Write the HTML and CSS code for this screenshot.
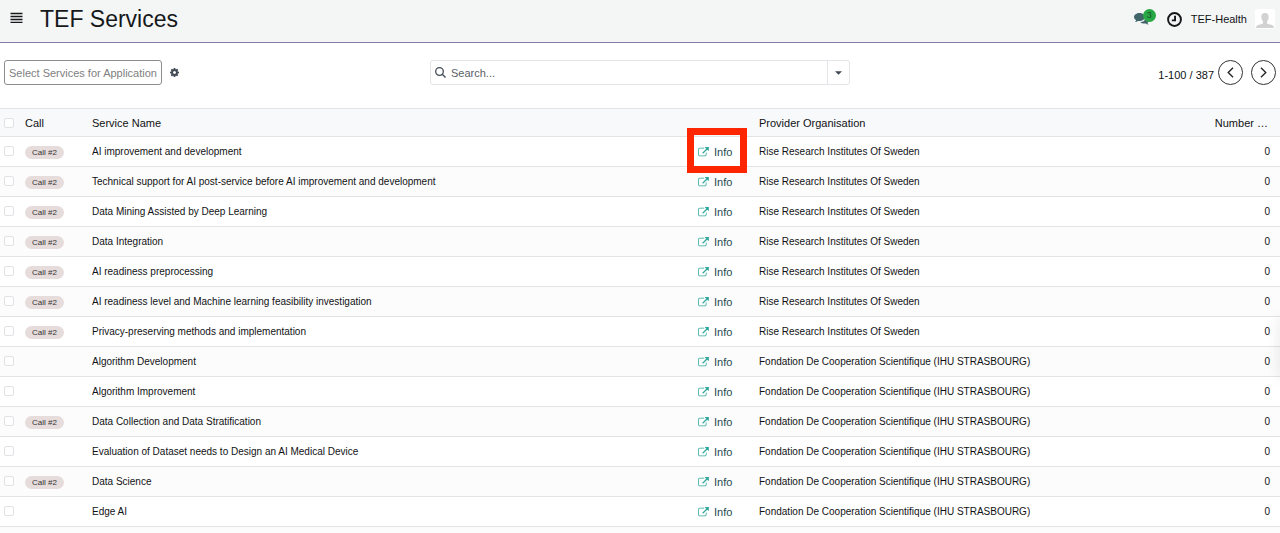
FILE: index.html
```html
<!DOCTYPE html>
<html lang="en">
<head>
<meta charset="utf-8">
<title>TEF Services</title>
<link rel="stylesheet" href="styles.css">
</head>
<body>
<svg class="sprite" aria-hidden="true">
  <symbol id="external" viewBox="0 0 1792 1664"><path d="M1408 928v320q0 119-84.500 203.500T1120 1536H288q-119 0-203.500-84.500T0 1248V416q0-119 84.500-203.500T288 128h704q14 0 23 9t9 23v64q0 14-9 23t-23 9H288q-66 0-113 47t-47 113v832q0 66 47 113t113 47h832q66 0 113-47t47-113V928q0-14 9-23t23-9h64q14 0 23 9t9 23zm384-864v512q0 26-19 45t-45 19-45-19l-176-176-652 652q-10 10-23 10t-23-10L695 983q-10-10-10-23t10-23l652-652-176-176q-19-19-19-45t19-45 45-19h512q26 0 45 19t19 45z"/></symbol>
</svg>
<div class="app">
  <header class="topbar">
    <button class="menu" aria-label="Menu"><svg viewBox="0 0 13 11"><path d="M.5 1.500h12M.5 4.500h12M.5 7.500h12M.5 10.500h12"/></svg></button>
    <h1 class="title">TEF Services</h1>
    <nav class="tray">
      <button class="messages" aria-label="Messages">
        <svg viewBox="0 0 15 12"><path d="M9 4.200c3.200-.6 6 .9 6 3.100 0 1-.6 1.900-1.500 2.500.2.700.6 1.100 1.100 1.600-1.100.1-2.100-.3-2.900-.9-2.300.4-4.300-.2-5.400-1.500C9 9 11.500 7.500 11.500 5z"/><path d="M5.500 0C8.500 0 11 1.800 11 4S8.500 8 5.500 8c-.5 0-1 0-1.500-.1-.9.700-1.900 1.100-3.100 1.200.6-.5 1-1.100 1.200-1.900C.8 6.400 0 5.300 0 4c0-2.200 2.500-4 5.500-4z"/></svg>
        <span class="count">3</span>
      </button>
      <button class="activity" aria-label="Activities"><svg viewBox="0 0 14 14"><circle cx="7" cy="7" r="6"/><path d="M7.500 3.500v4.300H4.500"/></svg></button>
      <button class="user">TEF-Health
        <svg viewBox="0 0 20 20"><rect class="photo" width="20" height="20" rx="2"/><path class="person" d="M10 4c2.500 0 3.700 1.500 3.700 4 0 2-.7 3.300-1.700 4.200v1.500c0 1 1.300 1.400 3.300 1.900 2.200.5 3.700 1.200 3.700 3.400H1c0-2.200 1.500-2.900 3.700-3.400 2-.5 3.300-.9 3.300-1.900v-1.500C7 11.300 6.300 10 6.300 8c0-2.500 1.200-4 3.700-4z"/></svg>
      </button>
    </nav>
  </header>
  <section class="controls">
    <div class="actions">
      <button class="select">Select Services for Application</button>
      <button class="gear" aria-label="Settings"><svg viewBox="128 128 1536 1536"><path d="M1152 896q0-106-75-181t-181-75-181 75-75 181 75 181 181 75 181-75 75-181zm512-109v222q0 12-8 23t-20 13l-185 28q-19 54-39 91 35 50 107 138 10 12 10 25t-9 23q-27 37-99 108t-94 71q-12 0-26-9l-138-108q-44 23-91 38-16 136-29 186-7 28-36 28h-222q-14 0-24.500-8.500t-11.500-21.500l-28-184q-49-16-90-37l-141 107q-10 9-25 9-14 0-25-11-126-114-165-168-7-10-7-23 0-12 8-23 15-21 51-66.500t54-70.500q-27-50-41-99l-183-27q-13-2-21-12.500t-8-23.500v-222q0-12 8-23t19-13l186-28q14-46 39-92-40-57-107-138-10-12-10-24 0-10 9-23 26-36 98.500-107.500t94.500-71.500q13 0 26 10l138 107q44-23 91-38 16-136 29-186 7-28 36-28h222q14 0 24.500 8.500t11.500 21.500l28 184q49 16 90 37l142-107q9-9 24-9 13 0 25 10 129 119 165 170 7 8 7 22 0 12-8 23-15 21-51 66.500t-54 70.500q26 50 41 98l183 28q13 2 21 12.500t8 23.500z"/></svg></button>
    </div>
    <div class="search">
      <svg class="lens" viewBox="0 0 11 11"><circle cx="4.500" cy="4.500" r="3.800"/><path d="M7.300 7.300l3.200 3.200"/></svg>
      <input type="text" aria-label="Search" placeholder="Search...">
      <button class="toggle" aria-label="Search options"><svg viewBox="0 0 8 4"><path d="M0 0h8L4 4z"/></svg></button>
    </div>
    <div class="pager">
      <span>1-100 / 387</span>
      <button class="round" aria-label="Previous"><svg viewBox="0 0 6 10"><path d="M5.300.6L.9 5l4.400 4.400"/></svg></button>
      <button class="round" aria-label="Next"><svg viewBox="0 0 6 10"><path d="M.7.6L5.100 5 .7 9.400"/></svg></button>
    </div>
  </section>
  <table class="list">
    <colgroup><col class="c-check"><col class="c-call"><col class="c-name"><col class="c-info"><col class="c-org"><col class="c-num"></colgroup>
    <thead>
      <tr><th><input type="checkbox" aria-label="Select all"></th><th>Call</th><th>Service Name</th><th></th><th>Provider Organisation</th><th class="num">Number …</th></tr>
    </thead>
    <tbody id="rows"></tbody>
  </table>
  <div class="edge-shadow"></div>
</div>
<script src="rows.js"></script>
</body>
</html>
```
FILE: styles.css
```css
* { box-sizing: border-box; }
body {
  margin: 0;
  font: 10px/16px "Liberation Sans", Arial, sans-serif;
  color: #111214;
  background: #fff;
}
button {
  font: inherit;
  color: inherit;
  background: none;
  border: 0;
  padding: 0;
}
svg { display: block; }
.sprite { display: none; }
.app { position: relative; height: 100vh; overflow: hidden; }

.topbar {
  display: flex;
  align-items: center;
  height: 43px;
  padding: 0 5px 4px 10px;
  background: #f4f6f6;
  border-bottom: 1px solid #8579a8;
}
.menu { margin-right: 17px; padding-bottom: 4px; }
.menu svg { width: 13px; height: 11px; stroke: #16181a; stroke-width: 1.300; }
.title { margin: 0; font-size: 23px; line-height: 28px; font-weight: 400; color: #16181a; }
.tray { display: flex; align-items: center; margin-left: auto; font-size: 11px; }
.messages { position: relative; margin-right: 18px; }
.messages svg { width: 15px; height: 12px; fill: #41656a; }
.count {
  position: absolute;
  left: 9px;
  top: -4px;
  width: 13px;
  height: 13px;
  border-radius: 7px;
  background: #28a745;
  color: #14532a;
  font-size: 9px;
  line-height: 13px;
}
.activity { margin-right: 9px; }
.activity svg { width: 15px; height: 15px; fill: none; stroke: #16181a; stroke-width: 1.800; }
.user { display: flex; align-items: center; gap: 8px; }
.user svg { width: 20px; height: 20px; }
.photo { fill: #fff; }
.person { fill: #d2d2d2; }

.controls {
  display: grid;
  grid-template-columns: 1fr 420px 1fr;
  align-items: center;
  height: 65px;
  padding: 0 4px 6px;
  font-size: 11px;
}
.actions { display: flex; align-items: center; gap: 8px; }
.select {
  height: 25px;
  padding: 0 4px;
  border: 1px solid #8d8d8d;
  border-radius: 3px;
  color: #808080;
}
.gear svg { width: 9px; height: 9px; fill: #414a54; }
.search {
  display: flex;
  align-items: center;
  height: 25px;
  border: 1px solid #e3e5e9;
  border-radius: 3px;
}
.lens { width: 11px; height: 11px; margin: 0 5px 0 4px; fill: none; stroke: #414a54; stroke-width: 1.300; }
.search input {
  flex: 1;
  min-width: 0;
  padding: 0;
  border: 0;
  font: inherit;
  color: #414a54;
}
.search input::placeholder { color: #5c6066; opacity: 1; }
.toggle {
  display: grid;
  place-items: center;
  width: 22px;
  height: 23px;
  border-left: 1px solid #e3e5e9;
}
.toggle svg { width: 7px; height: 4px; fill: #414a54; }
.pager { display: flex; align-items: center; justify-content: flex-end; gap: 8px; }
.pager span { padding-top: 4px; margin-right: -4px; }
.round {
  display: grid;
  place-items: center;
  width: 25px;
  height: 25px;
  border: 1px solid #333;
  border-radius: 50%;
}
.round svg { width: 7px; height: 11px; fill: none; stroke: #222; stroke-width: 1.200; }

.list { width: 100%; table-layout: fixed; border-collapse: separate; border-spacing: 0; }
.c-check { width: 20px; }
.c-call { width: 67px; }
.c-name { width: 606px; }
.c-info { width: 61px; }
.c-num { width: 68px; }
.list th, .list td {
  padding: 0 6px 0 5px;
  text-align: left;
  font-weight: 400;
  white-space: nowrap;
  border-bottom: 1px solid #e2e4e7;
}
.list th {
  height: 29px;
  font-size: 11px;
  background: #f8f9fb;
  border-top: 1px solid #e2e4e7;
}
.list td { height: 30px; }
.list tbody tr:nth-child(even) { background: #fcfcfc; }
.list th:first-child, .list td:first-child { padding: 0 0 0 4px; }
.list td:first-child { padding-bottom: 2px; }
.list .num { padding: 0 10px 0 0; text-align: right; }
.list th.num { padding-right: 12px; }
.list input {
  appearance: none;
  display: block;
  width: 10px;
  height: 10px;
  margin: 0;
  border: 1px solid #e0e2e5;
  border-radius: 2px;
  background: #fff;
}
.tag {
  display: block;
  width: 39px;
  height: 13px;
  margin-top: 1px;
  border-radius: 7px;
  background: #e6dcdc;
  color: #333;
  font-size: 8px;
  line-height: 13px;
  text-align: center;
}
.info {
  position: relative;
  display: flex;
  align-items: center;
  gap: 5px;
  color: #264a50;
  font-size: 11px;
  text-decoration: none;
}
.info svg { width: 11px; height: 10px; fill: #2fa89c; }
.marker {
  position: absolute;
  left: -11px;
  top: -16px;
  width: 60px;
  height: 45px;
  border: 7px solid #fd2600;
}
.edge-shadow {
  position: absolute;
  top: 318px;
  left: 100%;
  width: 8px;
  height: 60px;
  box-shadow: 0 0 14px rgba(0, 0, 0, .12);
}
```
FILE: rows.js
```js
const rise = "Rise Research Institutes Of Sweden";
const ihu = "Fondation De Cooperation Scientifique (IHU STRASBOURG)";
const services = [
  [true, "AI improvement and development", rise],
  [true, "Technical support for AI post-service before AI improvement and development", rise],
  [true, "Data Mining Assisted by Deep Learning", rise],
  [true, "Data Integration", rise],
  [true, "AI readiness preprocessing", rise],
  [true, "AI readiness level and Machine learning feasibility investigation", rise],
  [true, "Privacy-preserving methods and implementation", rise],
  [false, "Algorithm Development", ihu],
  [false, "Algorithm Improvement", ihu],
  [true, "Data Collection and Data Stratification", ihu],
  [false, "Evaluation of Dataset needs to Design an AI Medical Device", ihu],
  [true, "Data Science", ihu],
  [false, "Edge AI", ihu]
];
document.getElementById("rows").innerHTML = services.map(([call, name, org], i) => `
  <tr>
    <td><input type="checkbox" aria-label="Select ${name}"></td>
    <td>${call ? '<span class="tag">Call #2</span>' : ""}</td>
    <td>${name}</td>
    <td><a class="info" href="#"><svg aria-hidden="true"><use href="#external"/></svg>Info${i === 0 ? '<span class="marker"></span>' : ""}</a></td>
    <td>${org}</td>
    <td class="num">0</td>
  </tr>`).join("") + '<tr><td colspan="6"></td></tr>';
```
